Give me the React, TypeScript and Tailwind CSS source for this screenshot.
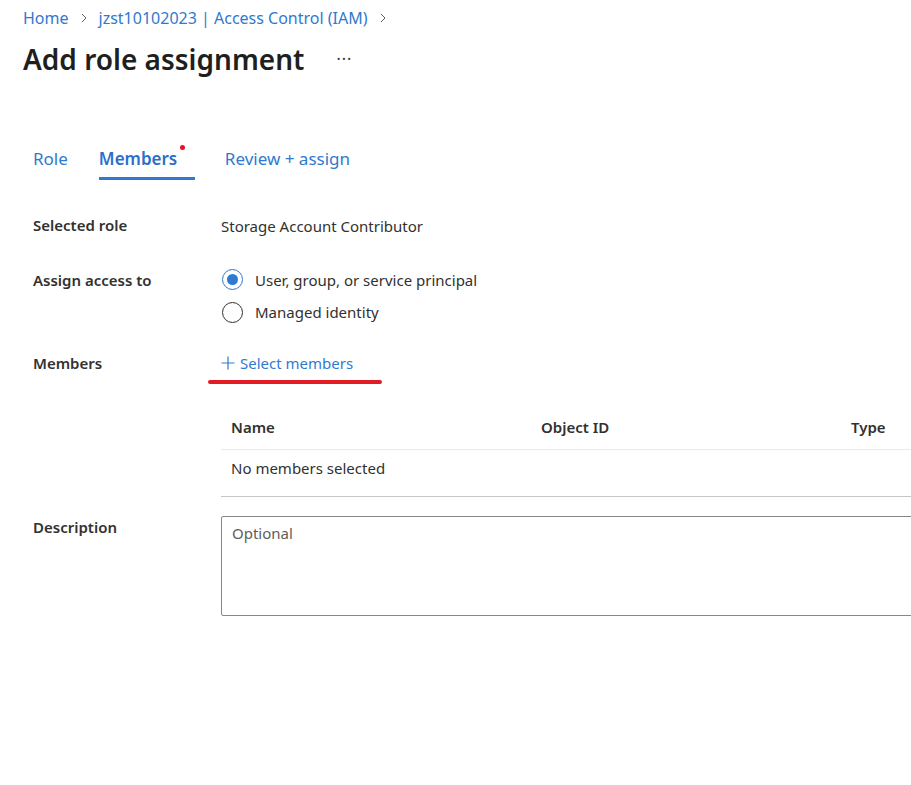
import React from 'react'

const font = { fontFamily: '"Segoe UI", "Noto Sans", "Open Sans", sans-serif' }

const Chevron = () => (
  <svg width="12" height="12" viewBox="0 0 12 12" className="mx-[9px]">
    <path d="M4 2l4 4-4 4" fill="none" stroke="#605e5c" strokeWidth="1" />
  </svg>
)

const Row = ({ label, children, className }: { label: string; children: React.ReactNode; className?: string }) => (
  <div className={'flex ' + (className || '')}>
    <div className="w-[221px] shrink-0 pl-[33px] text-[15px] font-semibold text-[#323130]">{label}</div>
    <div className="flex-1">{children}</div>
  </div>
)

const App = () => {
  return (
    <div className="w-[911px] h-[785px] overflow-hidden bg-white text-[#323130]" style={font}>
      {/* breadcrumb */}
      <div className="flex items-center pl-[23px] pt-[6px] text-[16px] text-[#2f7ad0]">
        <span>Home</span>
        <Chevron />
        <span>jzst10102023 | Access Control (IAM)</span>
        <Chevron />
      </div>

      <div className="flex items-center pl-[23px] mt-[9px]">
        <h1 className="text-[28px] font-semibold text-[#201f1e] leading-[40px]">Add role assignment</h1>
        <span className="ml-[32px] text-[16px] text-[#323130] tracking-[1px]">···</span>
      </div>

      {/* tabs */}
      <div className="flex items-end pl-[33px] mt-[67px] text-[17px] text-[#2f7ad0]">
        <div className="pb-[8px]">Role</div>
        <div className="relative ml-[31px] w-[96px] pb-[5px] font-semibold border-b-[3px] border-[#2f7ad0] text-[#2a6fc9]">
          Members
          <span className="absolute left-[81px] top-[-1px] w-[5px] h-[5px] rounded-full bg-[#e81123]" />
        </div>
        <div className="ml-[30px] pb-[8px]">Review + assign</div>
      </div>

      <Row label="Selected role" className="mt-[34px] items-center">
        <span className="text-[15px]">Storage Account Contributor</span>
      </Row>

      <Row label="Assign access to" className="mt-[31px]">
        <div className="flex flex-col gap-[10px] text-[15px]">
          <label className="flex items-center">
            <span className="w-[21px] h-[21px] rounded-full border border-[#2f7ad0] flex items-center justify-center ml-[1px]">
              <span className="w-[11px] h-[11px] rounded-full bg-[#2f7ad0]" />
            </span>
            <span className="ml-[12px]">User, group, or service principal</span>
          </label>
          <label className="flex items-center">
            <span className="w-[21px] h-[21px] rounded-full border border-[#323130] ml-[1px]" />
            <span className="ml-[12px]">Managed identity</span>
          </label>
        </div>
      </Row>

      <Row label="Members" className="mt-[28px]">
        <div className="relative inline-flex items-center text-[15px] text-[#2f7ad0]">
          <svg width="14" height="14" viewBox="0 0 14 14" className="mr-[5px] -mt-[2px]">
            <path d="M7 0.5v13M0.5 7h13" stroke="#2f7ad0" strokeWidth="1.2" fill="none" />
          </svg>
          <span>Select members</span>
          <span className="absolute left-[-13px] top-[28px] w-[174px] h-[4px] rounded-full bg-[#e31b23]" />
        </div>
      </Row>

      {/* members table */}
      <div className="ml-[221px] mt-[31px] w-[740px] text-[15px]">
        <div className="flex h-[43px] items-center border-b border-[#edebe9] pl-[10px] font-semibold">
          <div className="w-[310px]">Name</div>
          <div className="w-[310px]">Object ID</div>
          <div>Type</div>
        </div>
        <div className="h-[47px] border-b border-[#c8c6c4] pl-[10px] pt-[7px]">No members selected</div>
      </div>

      <Row label="Description" className="mt-[19px]">
        <div className="w-[740px] h-[100px] border border-[#8a8886] rounded-[2px] px-[10px] pt-[5px] text-[15px] text-[#605e5c]">
          Optional
        </div>
      </Row>
    </div>
  )
}

export default App
